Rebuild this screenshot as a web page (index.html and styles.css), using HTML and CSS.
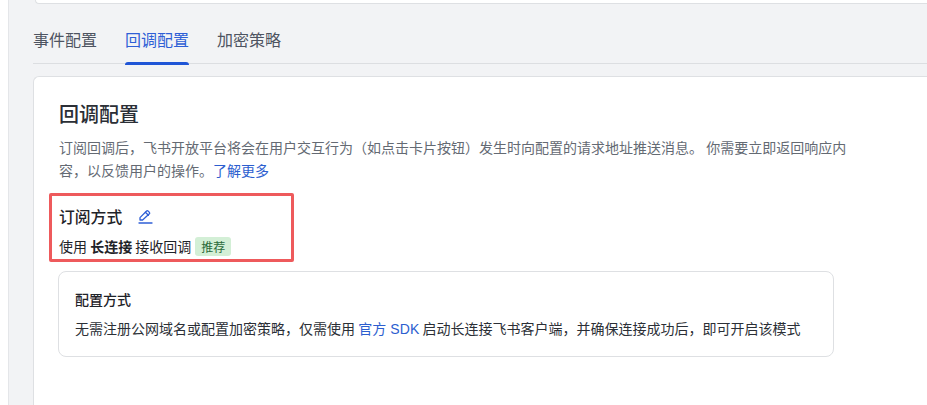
FILE: index.html
```html
<!DOCTYPE html>
<html lang="zh-CN">
<head>
<meta charset="utf-8">
<title>回调配置</title>
<link rel="stylesheet" href="styles.css">
</head>
<body>
<div class="page">
  <div class="gutter"></div>
  <main class="main">
    <div class="top-card"></div>
    <nav class="tabs">
      <a class="tab">事件配置</a>
      <a class="tab active">回调配置</a>
      <a class="tab">加密策略</a>
    </nav>
    <section class="card">
      <h1 class="title">回调配置</h1>
      <p class="desc">订阅回调后，飞书开放平台将会在用户交互行为（如点击卡片按钮）发生时向配置的请求地址推送消息。 你需要立即返回响应内容，以反馈用户的操作。<a class="link">了解更多</a></p>
      <div class="sub">
        <div class="annot"></div>
        <div class="sub-head">
          <span class="sub-title">订阅方式</span>
          <svg class="edit" width="16" height="16" viewBox="0 0 16 16" fill="none" stroke="#2f5fd6" stroke-width="1.3" stroke-linejoin="round" stroke-linecap="round">
            <path d="M3 11V8.6L9.6 2a1 1 0 0 1 1.4 0l1.4 1.4a1 1 0 0 1 0 1.4L5.6 11z"/>
            <path d="M8.4 3.3l3 3"/>
            <path d="M2 14h13"/>
          </svg>
        </div>
        <div class="sub-line">使用 <b class="strong">长连接</b> 接收回调<span class="tag">推荐</span></div>
      </div>
      <div class="box">
        <div class="box-title">配置方式</div>
        <div class="box-text">无需注册公网域名或配置加密策略，仅需使用 <a class="link latin">官方 SDK</a> 启动长连接飞书客户端，并确保连接成功后，即可开启该模式</div>
      </div>
    </section>
  </main>
</div>
</body>
</html>
```
FILE: styles.css
```css
* { box-sizing: border-box; }
html, body { margin: 0; height: 100%; overflow: hidden; }
body {
  font-family: "Noto Sans CJK SC", "Liberation Sans", sans-serif;
  color: #1f2329;
  background: #fff;
}
.page { display: flex; height: 405px; overflow: hidden; }
.gutter { width: 9px; flex: none; background: #fff; border-right: 1px solid #e4e6e9; }
.main {
  flex: 1;
  min-width: 0;
  background: #f2f3f5;
  padding-left: 24px;
  overflow: hidden;
}
.top-card {
  height: 4px;
  margin-left: 2px;
  background: #fff;
  border: 1px solid #dee0e3;
  border-top: 0;
  border-right: 0;
  border-bottom-left-radius: 6px;
}
.tabs {
  display: flex;
  gap: 28px;
  height: 60px;
  padding-top: 21px;
  border-bottom: 1px solid #dcdee1;
}
.tab {
  display: block;
  height: 39px;
  font-size: 16px;
  line-height: 28px;
  color: #4e5461;
  position: relative;
}
.tab.active { color: #2f5fd6; }
.tab.active::after {
  content: "";
  position: absolute;
  left: 0;
  right: 0;
  bottom: -1px;
  height: 3px;
  background: #1f55d6;
  border-radius: 3px 3px 0 0;
}
.card {
  margin-top: 12px;
  height: 329px;
  padding: 23px 0 0 25px;
  background: #fff;
  border: 1px solid #dee0e3;
  border-right: 0;
  border-bottom: 0;
  border-top-left-radius: 6px;
}
.title {
  margin: 0;
  font-size: 20px;
  line-height: 28px;
  font-weight: 500;
  color: #2b2f36;
}
.desc {
  margin: 8px 0 0;
  width: 795px;
  font-size: 14px;
  line-height: 23px;
  color: #646a73;
}
.link { color: #2c5ecf; }
.latin { font-family: "Liberation Sans", "Noto Sans CJK SC", sans-serif; letter-spacing: 0.1px; }
.sub { position: relative; margin-top: 22px; }
.annot {
  position: absolute;
  left: -10px;
  top: -11px;
  width: 245px;
  height: 69px;
  border: 3px solid #ee5a5c;
  border-radius: 2px;
}
.sub-head { display: flex; align-items: center; gap: 15px; height: 26px; }
.sub-title { font-size: 15.8px; line-height: 26px; font-weight: 500; }
.edit { flex: none; }
.sub-line { margin-top: 5px; font-size: 14px; line-height: 22px; display: flex; align-items: center; white-space: pre; }
.strong { font-weight: 700; }
.tag {
  margin-left: 4px;
  padding: 0 6px;
  height: 19px;
  line-height: 19px;
  font-size: 12px;
  color: #2b6b3a;
  background: #d3efd6;
  border-radius: 3px;
}
.box {
  width: 776px;
  height: 86px;
  margin-top: 14px;
  margin-left: -1px;
  padding: 16px 16px 0;
  background: #fff;
  border: 1px solid #dee0e3;
  border-radius: 8px;
}
.box-title { font-size: 14px; line-height: 22px; font-weight: 500; }
.box-text { margin-top: 7px; font-size: 14px; line-height: 22px; color: #2b2f36; white-space: nowrap; }
```
